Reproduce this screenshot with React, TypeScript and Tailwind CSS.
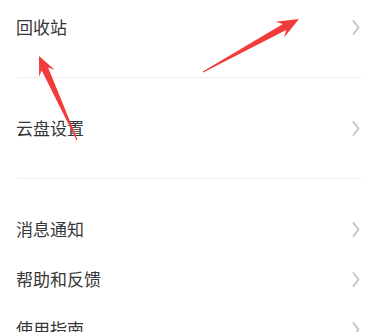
const font = { fontFamily: '"Noto Sans CJK SC", "Noto Sans", sans-serif' };

type Pt = [number, number];

// builds a tapered annotation arrow from tail to tip
function arrowPoints(tail: Pt, tip: Pt, headLen = 20, headHalf = 8, shaftHalf = 3) {
  const dx = tip[0] - tail[0];
  const dy = tip[1] - tail[1];
  const len = Math.hypot(dx, dy);
  const ux = dx / len;
  const uy = dy / len;
  const nx = -uy;
  const ny = ux;
  const base: Pt = [tip[0] - ux * headLen, tip[1] - uy * headLen];
  const notch: Pt = [tip[0] - ux * headLen * 0.75, tip[1] - uy * headLen * 0.75];
  const pts: Pt[] = [
    tip,
    [base[0] + nx * headHalf, base[1] + ny * headHalf],
    [notch[0] + nx * shaftHalf, notch[1] + ny * shaftHalf],
    [tail[0] + nx * 0.5, tail[1] + ny * 0.5],
    [tail[0] - nx * 0.5, tail[1] - ny * 0.5],
    [notch[0] - nx * shaftHalf, notch[1] - ny * shaftHalf],
    [base[0] - nx * headHalf, base[1] - ny * headHalf],
  ];
  return pts.map((p) => `${p[0].toFixed(1)},${p[1].toFixed(1)}`).join(' ');
}

function Chevron() {
  return (
    <svg width="8" height="15" viewBox="0 0 8 15" className="shrink-0">
      <polyline points="1.5,1 6.5,7.5 1.5,14" fill="none" stroke="#c2c2c2" strokeWidth="1.8" strokeLinejoin="round" strokeLinecap="round" />
    </svg>
  );
}

function Row({ label }: { label: string }) {
  return (
    <div className="flex h-[50px] items-center justify-between pl-4 pr-[12px]">
      <span className="text-[17px] text-[#363636]" style={font}>{label}</span>
      <Chevron />
    </div>
  );
}

function Divider() {
  return <div className="ml-[17px] mr-[10px] h-px bg-[#efefef]" />;
}

export default function App() {
  return (
    <div className="relative h-[332px] w-[372px] overflow-hidden bg-white">
      <div className="pt-[2px] pb-[25px]">
        <Row label="回收站" />
      </div>
      <Divider />
      <div className="py-[25px]">
        <Row label="云盘设置" />
      </div>
      <Divider />
      <div className="pt-[25px]">
        <Row label="消息通知" />
        <Row label="帮助和反馈" />
        <Row label="使用指南" />
      </div>

      {/* annotation arrows */}
      <svg className="pointer-events-none absolute inset-0" width="372" height="332">
        <polygon points={arrowPoints([203, 72], [299, 19], 22, 9, 3.5)} fill="#f23b3b" />
        <polygon points={arrowPoints([77, 140], [39, 56], 19, 8.5, 3.5)} fill="#f23b3b" />
      </svg>
    </div>
  );
}
